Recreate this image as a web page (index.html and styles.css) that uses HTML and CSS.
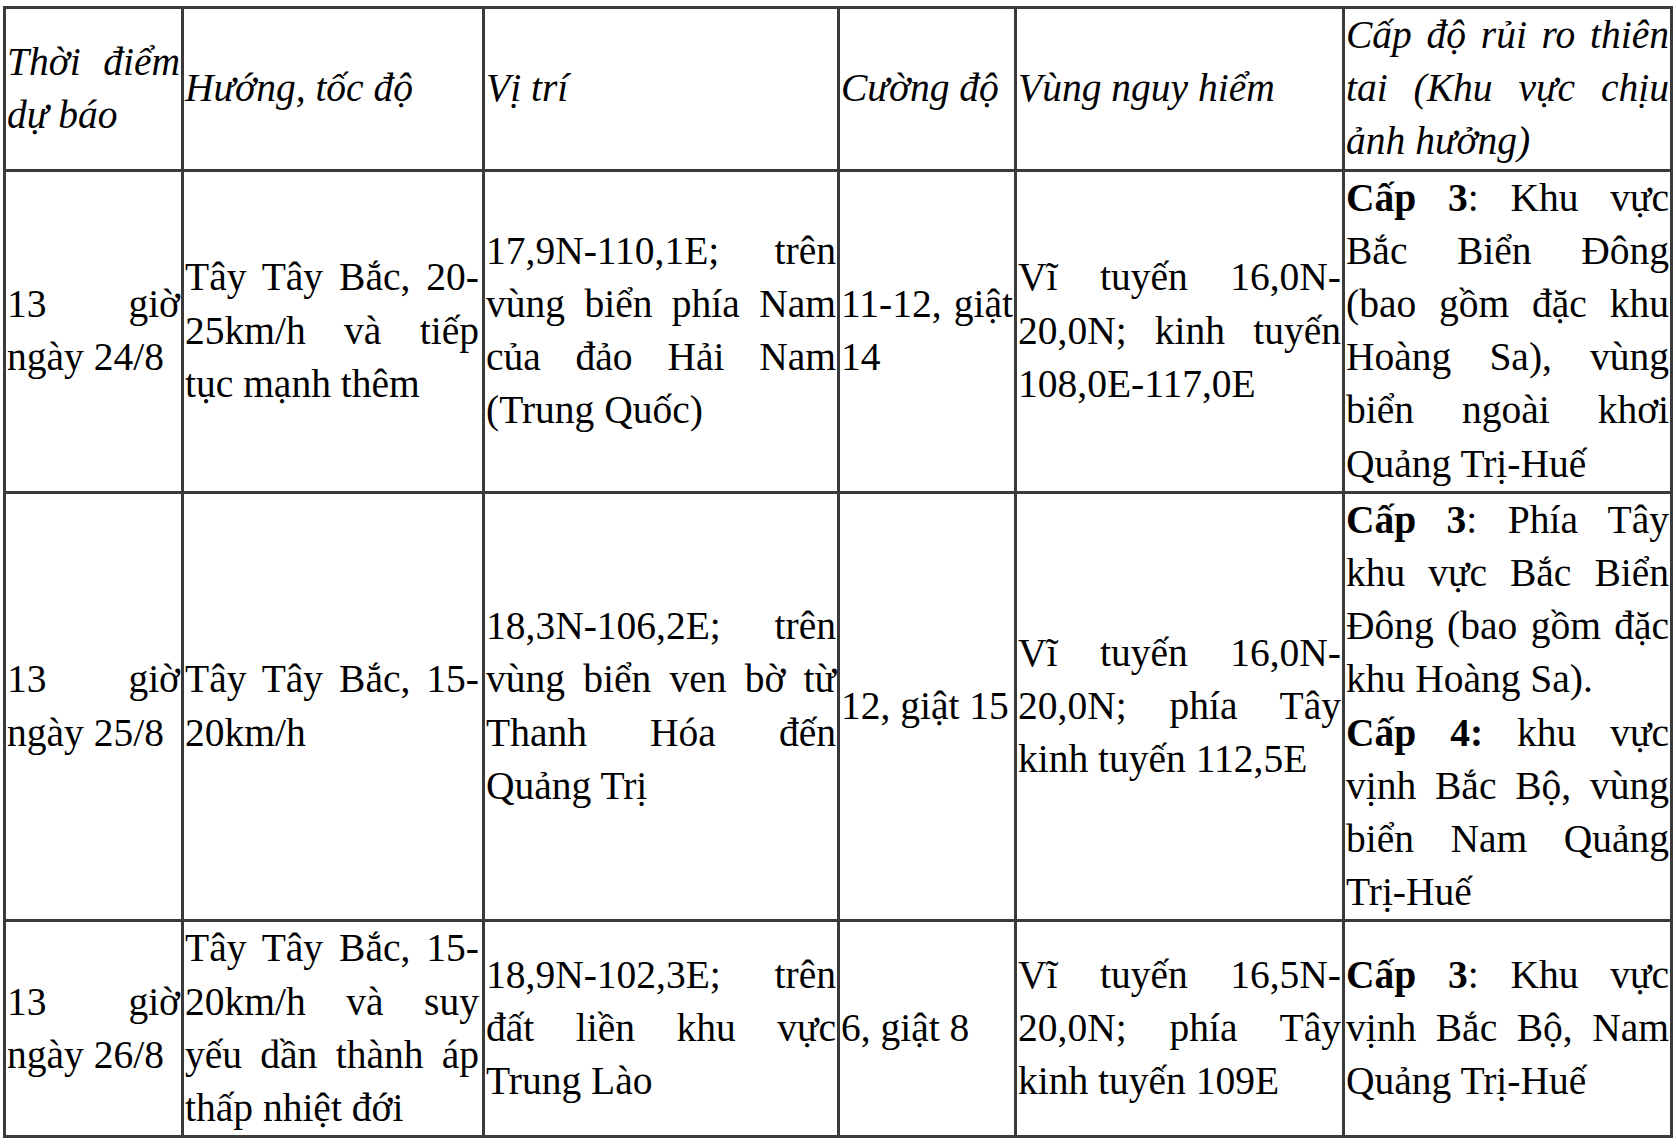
FILE: index.html
```html
<!DOCTYPE html>
<html lang="vi">
<head>
<meta charset="utf-8">
<title>Dự báo bão</title>
<link rel="stylesheet" href="styles.css">
</head>
<body>
<div class="wrap">
<table class="forecast">
  <colgroup>
    <col class="c1"><col class="c2"><col class="c3"><col class="c4"><col class="c5"><col class="c6">
  </colgroup>
  <tr class="head">
    <td><p>Thời điểm dự báo</p></td>
    <td class="dir"><p>Hướng, tốc độ</p></td>
    <td><p>Vị trí</p></td>
    <td><p>Cường độ</p></td>
    <td><p>Vùng nguy hiểm</p></td>
    <td><p>Cấp độ rủi ro thiên tai (Khu vực chịu ảnh hưởng)</p></td>
  </tr>
  <tr>
    <td><p>13 giờ ngày 24/8</p></td>
    <td class="dir"><p>Tây Tây Bắc, 20-25km/h và tiếp tục mạnh thêm</p></td>
    <td><p>17,9N-110,1E; trên vùng biển phía Nam của đảo Hải Nam (Trung Quốc)</p></td>
    <td><p>11-12, giật 14</p></td>
    <td><p>Vĩ tuyến 16,0N-20,0N; kinh tuyến 108,0E-117,0E</p></td>
    <td><p><b>Cấp 3</b>: Khu vực Bắc Biển Đông (bao gồm đặc khu Hoàng Sa), vùng biển ngoài khơi Quảng Trị-Huế</p></td>
  </tr>
  <tr>
    <td><p>13 giờ ngày 25/8</p></td>
    <td class="dir"><p>Tây Tây Bắc, 15-20km/h</p></td>
    <td><p>18,3N-106,2E; trên vùng biển ven bờ từ Thanh Hóa đến Quảng Trị</p></td>
    <td><p>12, giật 15</p></td>
    <td><p>Vĩ tuyến 16,0N-20,0N; phía Tây kinh tuyến 112,5E</p></td>
    <td><p><b>Cấp 3</b>: Phía Tây khu vực Bắc Biển Đông (bao gồm đặc khu Hoàng Sa).</p><p><b>Cấp 4:</b> khu vực vịnh Bắc Bộ, vùng biển Nam Quảng Trị-Huế</p></td>
  </tr>
  <tr>
    <td><p>13 giờ ngày 26/8</p></td>
    <td class="dir"><p>Tây Tây Bắc, 15-20km/h và suy yếu dần thành áp thấp nhiệt đới</p></td>
    <td><p>18,9N-102,3E; trên đất liền khu vực Trung Lào</p></td>
    <td><p>6, giật 8</p></td>
    <td><p>Vĩ tuyến 16,5N-20,0N; phía Tây kinh tuyến 109E</p></td>
    <td><p><b>Cấp 3</b>: Khu vực vịnh Bắc Bộ, Nam Quảng Trị-Huế</p></td>
  </tr>
</table>
</div>
</body>
</html>
```

FILE: styles.css
```css
html, body {
  margin: 0;
  padding: 0;
  background: #ffffff;
}

.wrap {
  padding: 6px 0 0 3px;
}

.forecast {
  border-collapse: collapse;
  table-layout: fixed;
  width: 1670px;
  font-family: "Liberation Serif", "Times New Roman", serif;
  font-size: 39.5px;
  line-height: 53.2px;
  color: #000000;
}

.c1 { width: 178px; }
.c2 { width: 301px; }
.c3 { width: 355px; }
.c4 { width: 177px; }
.c5 { width: 328px; }
.c6 { width: 328px; }

.forecast td {
  border: 3px solid #3a3a3a;
  padding: 0 1px;
  vertical-align: middle;
  text-align: justify;
}

.forecast td.dir {
  padding-right: 3px;
}

.forecast p {
  margin: 0;
}

.head td {
  font-style: italic;
}

.forecast b {
  font-weight: bold;
}
```
